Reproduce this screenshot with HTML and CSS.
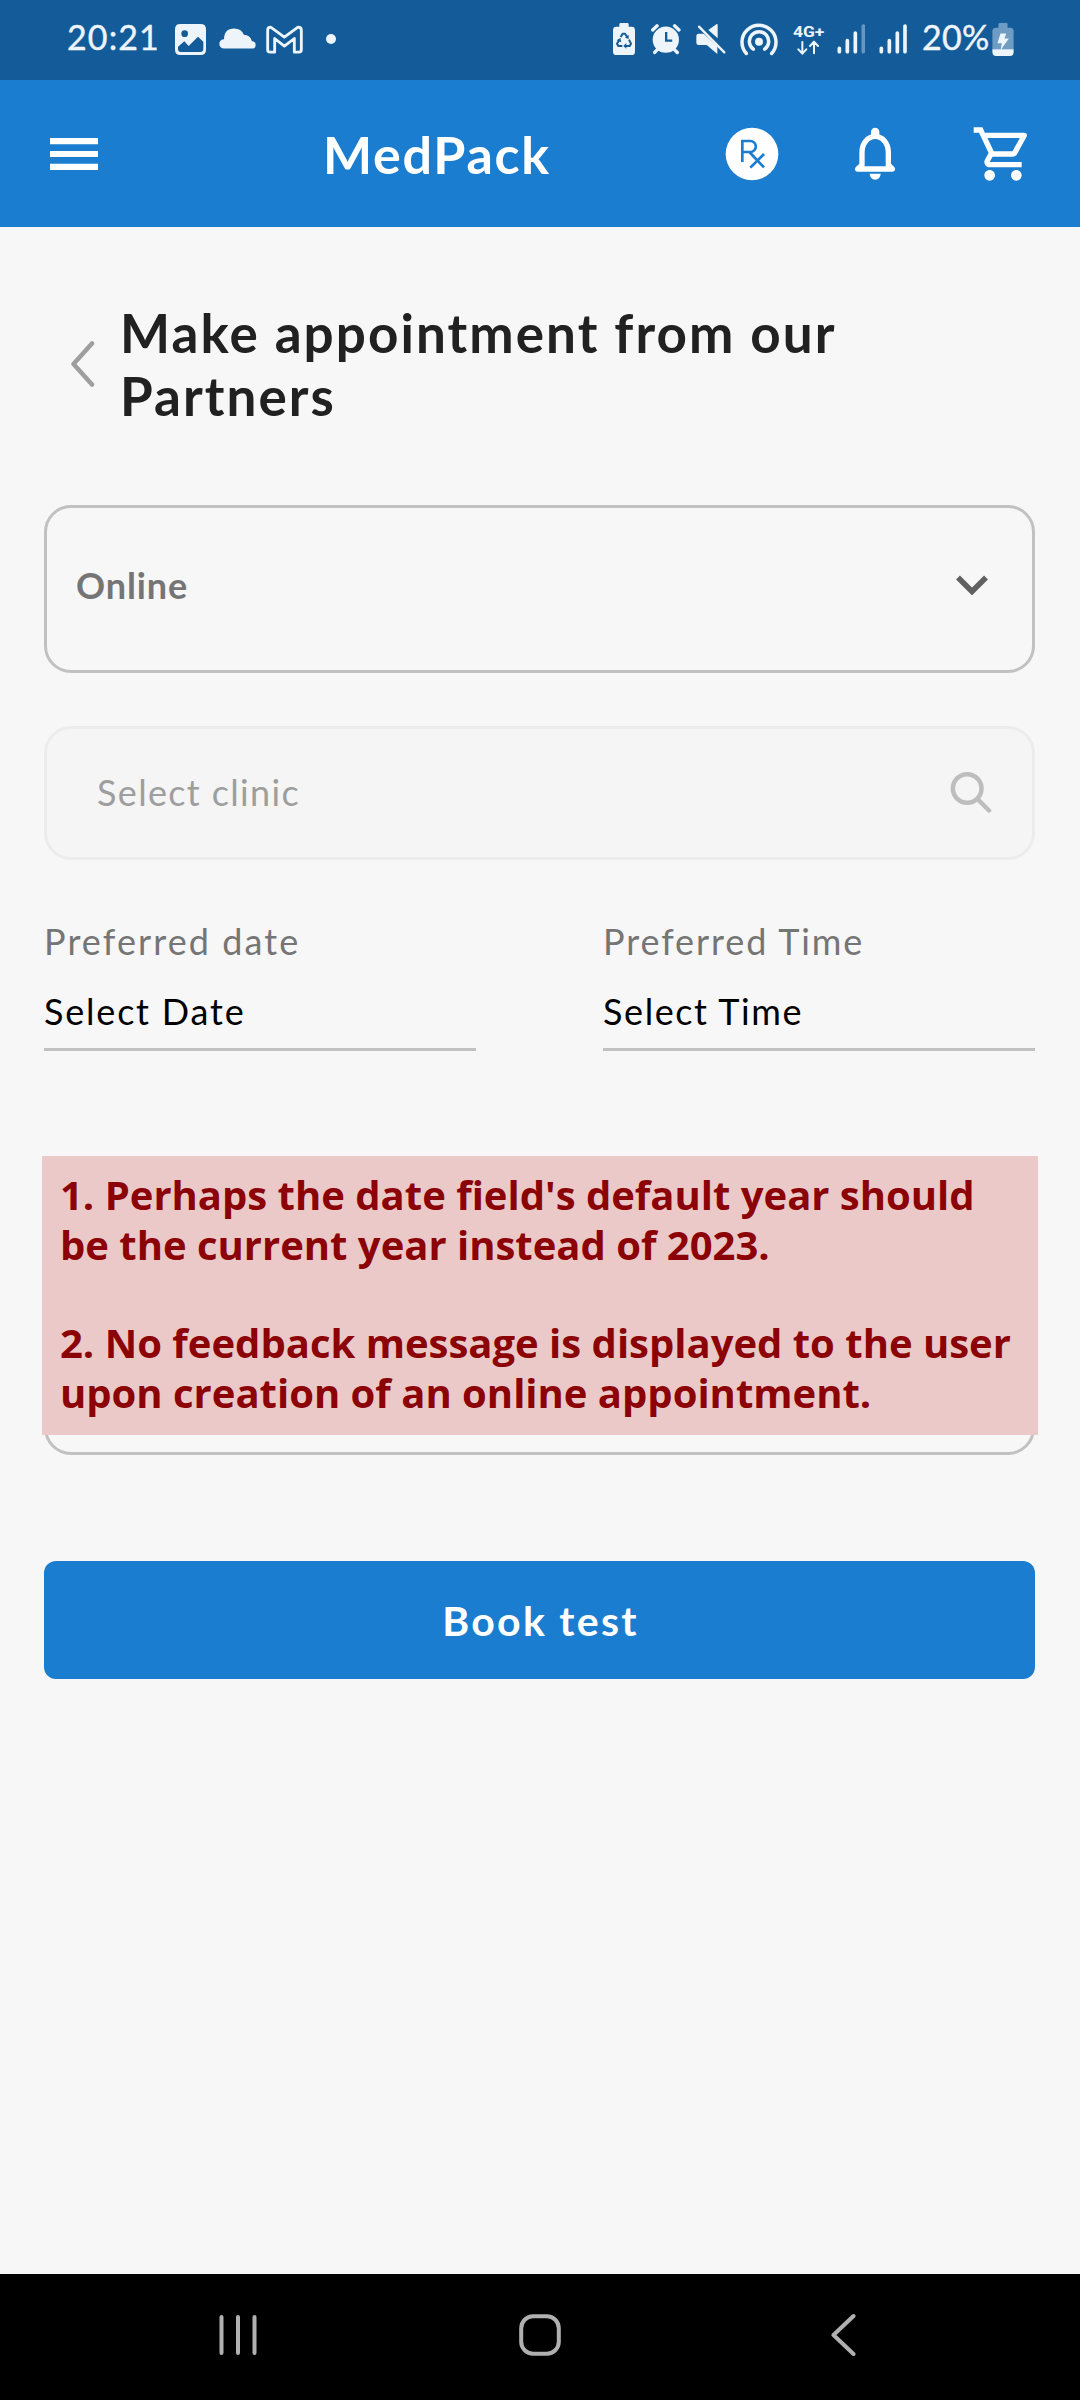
FILE: index.html
```html
<!DOCTYPE html>
<html lang="en">
<head>
<meta charset="utf-8">
<title>MedPack</title>
<link rel="stylesheet" href="styles.css">
</head>
<body>
<div class="screen">
  <div class="status-bar">
    <div class="status-left">
      <span class="clock">20:21</span>
      <svg class="s-image" width="31" height="31" viewBox="525 72 93 93"><path fill-rule="evenodd" fill="#edf4fa" d="M541 72H602Q618 72 618 88V149Q618 165 602 165H541Q525 165 525 149V88Q525 72 541 72ZM554 91A10 10 0 1 0 554 111A10 10 0 1 0 554 91ZM534 140V147Q534 156 543 156H601Q610 156 610 147V125L594 110L566 138L553 124Z"/></svg>
      <svg class="s-cloud" width="37" height="21" viewBox="657 83 110 62"><path fill="#edf4fa" d="M672 144A14 14 0 0 1 672 116Q672 84 702 84Q723 84 731 103Q750 104 755 122A11 11 0 0 1 755 144Z"/></svg>
      <svg class="s-mail" width="37" height="29" viewBox="798 73 111 86"><path fill="none" stroke="#edf4fa" stroke-width="8.500" stroke-linejoin="round" d="M803 88Q803 79 812 79L853 109L894 79Q904 79 904 88V147Q904 154 897 154H883V113L853 136L824 113V154H810Q803 154 803 147Z"/></svg>
      <span class="dot"></span>
    </div>
    <div class="status-right">
      <svg width="22" height="32" viewBox="69 68 66 96"><path fill="#edf4fa" d="M88 79V72Q88 68 92 68H112Q116 68 116 72V79H125Q135 79 135 89V154Q135 164 125 164H79Q69 164 69 154V89Q69 79 79 79Z"/><path fill="none" stroke="#145c99" stroke-width="6" stroke-linejoin="round" d="M92 110L98 100H105L112 111M117 118L123 130L119 137H105M97 137H85L81 130L88 118"/><path fill="#145c99" d="M116 103V116L105 112ZM109 128V145L100 137ZM80 120L91 113L94 126Z"/></svg>
      <svg class="s-alarm" width="30" height="32" viewBox="185 70 89 92"><circle cx="229" cy="118" r="39" fill="#edf4fa"/><path stroke="#edf4fa" stroke-width="10" stroke-linecap="round" d="M190 89L203 77M268 89L255 77M205 146L196 156M253 146L263 156"/><path fill="none" stroke="#145c99" stroke-width="7" d="M230 95V121H248"/></svg>
      <svg class="s-mute" width="30" height="32" viewBox="320 68 90 94"><path fill="#edf4fa" d="M328 99H343L384 137V160L352 133H328Q321 133 321 126V106Q321 99 328 99ZM357 88L382 70Q385 69 385 73V113Z"/><path stroke="#edf4fa" stroke-width="7" stroke-linecap="round" d="M329 78L405 155"/></svg>
      <svg class="s-hotspot" width="38" height="33" viewBox="452 65 114 98"><circle cx="509" cy="121" r="12" fill="#edf4fa"/><path fill="none" stroke="#edf4fa" stroke-width="10.500" stroke-linecap="round" d="M492 143A29 29 0 1 1 526 143M471 156A51 51 0 1 1 547 156"/></svg>
      <svg class="s-net" width="33" height="36" viewBox="608 66 99 108"><text x="611" y="110" class="net-text" textLength="94" lengthAdjust="spacingAndGlyphs">4G+</text><path fill="none" stroke="#edf4fa" stroke-width="6" stroke-linecap="round" stroke-linejoin="round" d="M639 126V160M627 148L639 161L651 148M674 160V126M662 138L674 125L686 138"/></svg>
      <svg class="s-sig" width="28" height="30" viewBox="50 71 84 90"><path stroke="#edf4fa" stroke-width="11" stroke-linecap="round" d="M57 144V154M81 121V154M105 98V154"/><path stroke="#6697c0" stroke-width="11" stroke-linecap="round" d="M129 77V154"/></svg>
      <svg class="s-sig2" width="28" height="30" viewBox="176 71 84 90"><path stroke="#edf4fa" stroke-width="11" stroke-linecap="round" d="M183 144V154M207 121V154M231 98V154M254 77V154"/></svg>
      <span class="percent">20%</span>
      <svg class="s-batt" width="22" height="33" viewBox="518 66 65 98"><path fill="#6e9cc3" d="M537 80V70Q537 66 541 66H560Q564 66 564 70V80H571Q582 80 582 90V145H519V90Q519 80 530 80Z"/><path fill="#edf4fa" d="M519 144H582V153Q582 164 571 164H530Q519 164 519 153ZM543 97H560L555 112H568L543 147L547 126H534Z"/></svg>
    </div>
  </div>

  <header class="app-bar">
    <svg class="menu" width="64" height="64" viewBox="0 0 24 24"><path fill="#fff" d="M3 18h18v-2.300H3zM3 13.150h18v-2.300H3zM3 6v2.300h18V6z"/></svg>
    <h1 class="brand">MedPack</h1>
    <div class="actions">
      <svg class="rx" width="54" height="54" viewBox="105 109 162 162"><circle cx="186" cy="190" r="79" fill="#fff"/><path fill="none" stroke="#1a7dcf" stroke-width="8" d="M157 214V151H181A16 16 0 0 1 181 184H157M178 184L222 230M222 190L181 231"/></svg>
      <svg class="bell" width="42" height="54" viewBox="492 112 126 162"><path fill="none" stroke="#fff" stroke-width="16" stroke-linejoin="round" d="M516 226V187A39.500 47 0 0 1 595 187V226L607 238H503Z"/><path fill="#fff" d="M543 142V127A12.500 12.500 0 0 1 568 127V142ZM539 252H572A16.500 18 0 0 1 539 252Z"/></svg>
      <svg class="cart" width="64" height="64" viewBox="0 0 24 24"><path fill="#fff" d="M15.550 13c.75 0 1.410-.41 1.750-1.030l3.580-6.490c.37-.66-.11-1.480-.87-1.480H5.210l-.94-2H1v2h2l3.600 7.590-1.350 2.440C4.520 15.370 5.480 17 7 17h12v-2H7l1.100-2zM6.160 6h12.150l-2.760 5H8.530zM7 18c-1.100 0-1.990.9-1.990 2S5.900 22 7 22s2-.9 2-2-.9-2-2-2m10 0c-1.100 0-1.990.9-1.990 2s.89 2 1.990 2 2-.9 2-2-.9-2-2-2"/></svg>
    </div>
  </header>

  <main class="content">
    <div class="heading">
      <svg width="26" height="48" viewBox="0 0 26 48"><path fill="none" stroke="#9e9e9e" stroke-width="4.500" stroke-linecap="round" stroke-linejoin="round" d="M23 3.500L4.500 24L23 44.500"/></svg>
      <h2 class="title">Make appointment from our Partners</h2>
    </div>

    <div class="select">
      <span>Online</span>
      <svg width="32" height="20" viewBox="0 0 32 20"><path fill="none" stroke="#616161" stroke-width="5.500" d="M2 2.500L16 16.500L30 2.500"/></svg>
    </div>

    <div class="search">
      <span>Select clinic</span>
      <svg width="42" height="42" viewBox="0 0 42 42"><g fill="none" stroke="#bdbdbd" stroke-width="4.500" stroke-linecap="round"><circle cx="17.200" cy="17.500" r="14.300"/><path d="M28 28.500L39 39.500"/></g></svg>
    </div>

    <div class="when">
      <div class="field"><label class="date-label">Preferred date</label><div class="value">Select Date</div></div>
      <div class="field"><label>Preferred Time</label><div class="value time">Select Time</div></div>
    </div>

    <div class="notes-box">
      <div class="annotation">
        <p>1. Perhaps the date field's default year should<br>be the current year instead of 2023.</p>
        <p>2. No feedback message is displayed to the user<br>upon creation of an online appointment.</p>
      </div>
    </div>

    <button class="book">Book test</button>
  </main>

  <nav class="nav-bar">
    <svg width="38" height="42" viewBox="0 0 38 42"><path stroke="#b0b0b0" stroke-width="4" stroke-linecap="round" d="M2.500 3V39M19 3V39M35.500 3V39"/></svg>
    <svg class="home" width="42" height="42" viewBox="0 0 42 42"><rect x="2.200" y="2.200" width="37.600" height="37.600" rx="12" fill="none" stroke="#b0b0b0" stroke-width="4"/></svg>
    <svg width="26" height="44" viewBox="0 0 26 44"><path fill="none" stroke="#b0b0b0" stroke-width="4" stroke-linecap="round" stroke-linejoin="round" d="M22.500 3L2.500 22L22.500 41"/></svg>
  </nav>
</div>
</body>
</html>
```
FILE: styles.css
```css
* { box-sizing: border-box; margin: 0; padding: 0; }
body { background: #f7f7f7; font-family: Lato, "Open Sans", sans-serif; }
svg { display: block; flex: none; }
.screen { width: 1080px; height: 2400px; display: flex; flex-direction: column; }

.status-bar { height: 80px; padding: 0 66px 0 67px; background: #145c99; display: flex; justify-content: space-between; color: #edf4fa; font-size: 34px; line-height: 40px; }
.status-left, .status-right { display: flex; align-items: center; }
.clock { width: 108px; letter-spacing: 1.1px; margin-top: -6px; -webkit-text-stroke: .4px #edf4fa; }
.s-image { margin-top: -1px; }
.s-cloud { margin: -4px 0 0 13px; }
.s-mail { margin: -2px 0 0 10px; }
.dot { width: 10px; height: 10px; border-radius: 50%; background: #edf4fa; margin: -2px 0 0 23px; }
.status-right > svg { margin-top: -2px; }
.status-right .s-alarm { margin-left: 16px; }
.status-right .s-mute { margin-left: 15px; }
.status-right .s-hotspot { margin-left: 14px; }
.status-right .s-net { margin-left: 14px; margin-top: 0; }
.status-right .s-sig { margin-left: 12px; }
.status-right .s-sig2 { margin-left: 14px; }
.percent { margin: -6px 0 0 15px; width: 70px; letter-spacing: .3px; -webkit-text-stroke: .4px #edf4fa; }
.net-text { font: 700 44px Roboto, sans-serif; fill: #edf4fa; }

.app-bar { height: 147px; padding: 0 45px 0 42px; background: #1a7dcf; display: flex; align-items: center; }
.brand { margin-left: 217px; width: 402px; color: #fff; font-size: 52px; font-weight: 700; line-height: 60px; letter-spacing: 1.7px; }
.actions { display: flex; align-items: center; }
.bell { margin-left: 75px; }
.cart { margin-left: 75px; }

.content { flex: 1; padding: 74px 45px 0 44px; display: flex; flex-direction: column; }
.heading { display: flex; align-items: center; gap: 25px; padding-left: 25px; height: 126px; }
.title { width: 740px; color: #212121; font-size: 53px; font-weight: 700; line-height: 63px; letter-spacing: 2.05px; }
.select { margin-top: 78px; height: 168px; padding: 0 44px 8px 29px; border: 3px solid #c1c1c1; border-radius: 27px; display: flex; align-items: center; justify-content: space-between; color: #757575; font-size: 36px; font-weight: 700; letter-spacing: .9px; }
.search { margin-top: 53px; height: 134px; padding: 0 40px 2px 50px; border: 3px solid #ececec; border-radius: 27px; background: #f5f5f5; display: flex; align-items: center; justify-content: space-between; color: #9e9e9e; font-size: 36px; letter-spacing: 1.35px; }
.when { margin-top: 60px; display: grid; grid-template-columns: 432px 432px; justify-content: space-between; font-size: 36px; }
.field label { display: block; height: 42px; line-height: 42px; color: #757575; letter-spacing: 1.9px; }
.field .date-label { letter-spacing: 2.1px; }
.value { margin-top: 28px; height: 61px; line-height: 42px; border-bottom: 3px solid #c1c1c1; color: #000; letter-spacing: 1.8px; }
.value.time { letter-spacing: 1.6px; }

.notes-box { position: relative; margin-top: 108px; height: 296px; border: 3px solid #c1c1c1; border-radius: 27px; }
.annotation { position: absolute; left: -5px; top: -6px; width: 996px; height: 279px; padding: 14px 18px; background: #ebc9c9; color: #8b0306; font: 700 40px/49.600px "Open Sans", sans-serif; white-space: nowrap; }
.annotation p + p { margin-top: 49px; }

.book { margin-top: 106px; height: 118px; border: 0; border-radius: 12px; padding-left: 2px; background: #1a7dcf; color: #fff; font: 700 41px Lato, sans-serif; letter-spacing: 2.3px; }

.nav-bar { height: 126px; padding: 0 223px 5px 219px; background: #000; display: flex; align-items: center; justify-content: space-between; }
.home { margin: 0 4px 0 -4px; }
```
